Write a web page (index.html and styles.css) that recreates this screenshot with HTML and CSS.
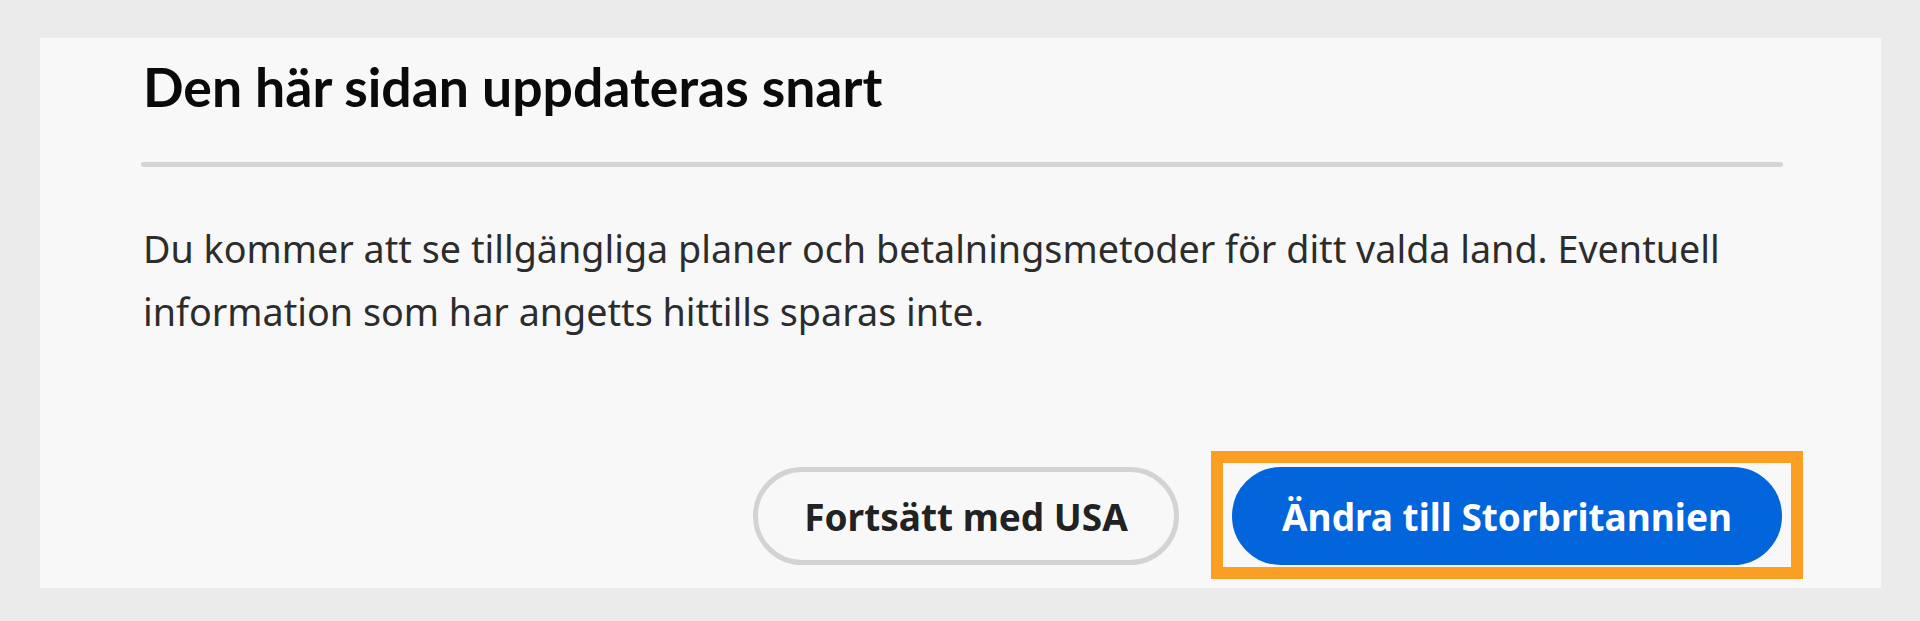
FILE: index.html
```html
<!DOCTYPE html>
<html lang="sv">
<head>
<meta charset="utf-8">
<title>Den här sidan uppdateras snart</title>
<link rel="stylesheet" href="styles.css">
</head>
<body>
  <div class="modal">
    <h2 class="modal-title">Den här sidan uppdateras snart</h2>
    <div class="divider"></div>
    <p class="modal-text">Du kommer att se tillgängliga planer och betalningsmetoder för ditt valda land. Eventuell information som har angetts hittills sparas inte.</p>
    <div class="actions">
      <button class="btn btn-secondary" type="button">Fortsätt med USA</button>
      <button class="btn btn-primary highlighted" type="button">Ändra till Storbritannien</button>
    </div>
  </div>
</body>
</html>
```
FILE: styles.css
```css
html, body {
  margin: 0;
  height: 100%;
}
body {
  background: #ebebeb;
  padding: 38px 39px 0 40px;
  box-sizing: border-box;
}
.modal {
  background: #f8f8f8;
  height: 550px;
  box-sizing: border-box;
  padding: 16px 100px 23px 103px;
  display: flex;
  flex-direction: column;
}
.modal-title {
  margin: 0;
  font-family: Lato, "Noto Sans", sans-serif;
  font-weight: 700;
  font-size: 53.5px;
  line-height: 64px;
  color: #0a0a0a;
}
.divider {
  height: 5px;
  margin: 44px -2px 0 -2px;
  background: #d5d5d5;
  border-radius: 3px;
}
.modal-text {
  margin: 50px 0 0 0;
  font-family: "Noto Sans", sans-serif;
  font-size: 37.7px;
  line-height: 63px;
  color: #2c2c2c;
}
.actions {
  margin-top: auto;
  display: flex;
  justify-content: flex-end;
  gap: 53px;
}
.btn {
  height: 98px;
  border-radius: 49px;
  border: 5px solid transparent;
  box-sizing: border-box;
  font-family: "Noto Sans", sans-serif;
  font-weight: 700;
  font-size: 37px;
  line-height: 1;
  display: flex;
  align-items: center;
  justify-content: center;
  cursor: pointer;
}
.btn-secondary {
  width: 426px;
  background: #f8f8f8;
  border-color: #d3d3d3;
  color: #222222;
}
.btn-primary {
  width: 550px;
  background: #0265dc;
  border-color: #0265dc;
  color: #ffffff;
  margin-right: -1px;
}
.highlighted {
  position: relative;
}
.highlighted::after {
  content: "";
  position: absolute;
  top: -21px;
  bottom: -19px;
  left: -26px;
  right: -26px;
  border: 12px solid #fa9f23;
  pointer-events: none;
}
```
